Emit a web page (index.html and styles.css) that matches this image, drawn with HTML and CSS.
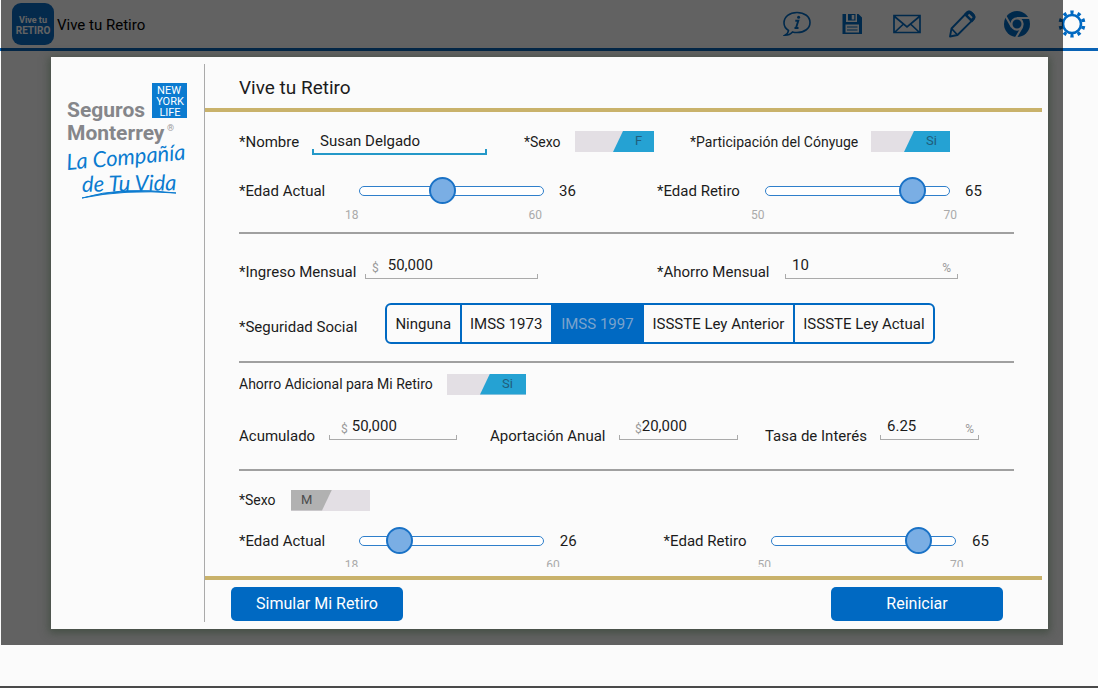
FILE: index.html
```html
<!DOCTYPE html>
<html lang="es">
<head>
<meta charset="utf-8">
<meta name="viewport" content="width=device-width, initial-scale=1">
<title>Vive tu Retiro</title>
<link rel="stylesheet" href="styles.css">
</head>
<body>
<div class="screen">
  <header class="topbar">
    <svg class="app-icon" viewBox="0 0 42 42" role="img" aria-label="Vive tu Retiro">
      <rect width="42" height="42" rx="9" fill="#0b6cc4"/>
      <text x="21" y="20" class="app-icon-text app-icon-small">Vive tu</text>
      <text x="21" y="31" class="app-icon-text app-icon-big">RETIRO</text>
    </svg>
    <span class="app-name">Vive tu Retiro</span>
    <nav class="actions" aria-label="Acciones">
      <button class="action" type="button" aria-label="Información">
        <svg viewBox="0 0 28 28" fill="none" stroke="#0069c2" stroke-width="1.6"><path d="M5.500 20.500C2.500 18.500 1 16 1 13 1 6.500 6.500 2.500 14 2.500S27 6.500 27 12.500 21.500 22.500 14 22.500c-2 0-3.200-.2-4.500-.6C7.500 24.300 5 25.200 2 25.200c2-1.200 3.300-2.700 3.500-4.700z"/><path d="M12.300 10.800h3l-2.300 7.200h2.500M11.500 18h2" stroke-width="1.900"/><circle cx="15.600" cy="7.200" r="1.500" fill="#0069c2" stroke="none"/></svg>
      </button>
      <button class="action" type="button" aria-label="Guardar">
        <svg viewBox="0 0 28 28"><path fill="#0069c2" fill-rule="evenodd" d="M4.500 4H8v8h11V4h1.500L24 7.500V24H4.500zM7.500 14.500v8h13.500v-8zM10 4h7.500v6.500H10zm3.700 1v4.500h2.600V5z"/><path d="M9 17h10.500M9 20h10.500" stroke="#0069c2" stroke-width="1.200"/></svg>
      </button>
      <button class="action" type="button" aria-label="Correo">
        <svg viewBox="0 0 28 28" fill="none" stroke="#0069c2" stroke-width="1.700"><path d="M1 5.500h26v17H1zM1.500 6.500 14 17 26.500 6.500M2 22l8.500-8M26 22l-8.500-8"/></svg>
      </button>
      <button class="action" type="button" aria-label="Editar">
        <svg viewBox="0 0 28 28" fill="none" stroke="#0069c2" stroke-width="1.800" stroke-linejoin="round"><path d="M2 26.500 3.500 18.500 19 2.500q2-2 4.500.2l2 2q2 2.300 0 4.500L9.500 25zM3.500 18.500l6 6.500"/><path d="m17 4.500 6.800 6.800 1.900-2.100q1.600-2.200-.2-4.500l-2-2q-2.500-2-4.500-.2z" fill="#0069c2"/><path d="m20.500 4.500 3.500 3.500" stroke="#fbfbfb" stroke-width="2"/></svg>
      </button>
      <button class="action" type="button" aria-label="Navegador">
        <svg viewBox="0 0 28 28"><circle cx="14" cy="14" r="13" fill="#0069c2"/><circle cx="14" cy="14" r="5.600" fill="none" stroke="#fbfbfb" stroke-width="2.200"/><path d="M14 8h13M8.800 17 2.500 6M19.200 17l-6.500 11" stroke="#fbfbfb" stroke-width="2"/></svg>
      </button>
      <button class="action" type="button" aria-label="Configuración">
        <svg viewBox="0 0 28 28" fill="none" stroke="#0069c2"><circle cx="14" cy="14" r="9" stroke-width="2.600"/><circle cx="14" cy="14" r="11.700" stroke-width="3.600" pathLength="100" stroke-dasharray="4.400 5.600" stroke-dashoffset="-2.800"/></svg>
      </button>
    </nav>
  </header>

  <div class="overlay">
    <section class="dialog" role="dialog" aria-labelledby="dialog-title">
      <aside class="brand">
        <svg class="brand-logo" viewBox="0 0 124 124" role="img" aria-label="Seguros Monterrey New York Life, La Compañía de Tu Vida">
          <rect x="87" y="1" width="35" height="35" fill="#0b7bd0"/>
          <text x="104" y="12" class="nyl">NEW</text>
          <text x="105" y="23" class="nyl">YORK</text>
          <text x="105" y="34" class="nyl">LIFE</text>
          <text x="2" y="35" class="brand-name">Seguros</text>
          <text x="2" y="58" class="brand-name">Monterrey</text>
          <text x="102" y="49" class="brand-reg">®</text>
          <text x="2" y="88" class="motto" transform="rotate(-5 2 88)">La Compañía</text>
          <text x="17" y="110" class="motto" transform="rotate(-1 17 110)">de Tu Vida</text>
          <path d="M17 116Q57 104 111 111 60 107 17 116z" fill="#0b7bd0" stroke="#0b7bd0"/>
        </svg>
      </aside>
      <form class="panel">
        <h1 class="panel-title" id="dialog-title">Vive tu Retiro</h1>
        <div class="panel-body">
          <div class="row row-person">
            <label for="nombre">*Nombre</label>
            <span class="field field-active field-name"><input id="nombre" type="text" value="Susan Delgado"></span>
            <label class="small" for="sexo">*Sexo</label>
            <span class="switch switch-on"><input id="sexo" type="checkbox" checked><span class="switch-thumb">F</span></span>
            <label class="small" for="conyuge">*Participación del Cónyuge</label>
            <span class="switch switch-on switch-wide"><input id="conyuge" type="checkbox" checked><span class="switch-thumb">Si</span></span>
          </div>
          <div class="row row-age">
            <label for="edad">*Edad Actual</label>
            <input class="slider" id="edad" type="range" min="18" max="60" step="0.5" value="36.5">
            <output for="edad">36</output>
            <label for="retiro">*Edad Retiro</label>
            <input class="slider" id="retiro" type="range" min="50" max="70" value="67">
            <output for="retiro">65</output>
            <div class="scale scale-first scale-short"><span>18</span><span>60</span></div>
            <div class="scale scale-second"><span>50</span><span>70</span></div>
          </div>
          <hr class="rule">
          <div class="row row-income">
            <label for="ingreso">*Ingreso Mensual</label>
            <span class="field field-wide"><span class="unit">$</span><input id="ingreso" type="text" value="50,000"></span>
            <label for="ahorro">*Ahorro Mensual</label>
            <span class="field field-wide"><input id="ahorro" type="text" value="10"><span class="unit">%</span></span>
          </div>
          <div class="row row-social">
            <span class="caption" id="social">*Seguridad Social</span>
            <div class="segments" role="group" aria-labelledby="social">
              <button type="button">Ninguna</button>
              <button type="button">IMSS 1973</button>
              <button type="button" class="selected" aria-pressed="true">IMSS 1997</button>
              <button type="button">ISSSTE Ley Anterior</button>
              <button type="button">ISSSTE Ley Actual</button>
            </div>
          </div>
          <hr class="rule">
          <div class="row row-extra">
            <label class="small" for="adicional">Ahorro Adicional para Mi Retiro</label>
            <span class="switch switch-on switch-wide"><input id="adicional" type="checkbox" checked><span class="switch-thumb">Si</span></span>
          </div>
          <div class="row row-savings">
            <label for="acumulado">Acumulado</label>
            <span class="field field-saved"><span class="unit">$</span><input id="acumulado" type="text" value="50,000"></span>
            <label for="aportacion">Aportación Anual</label>
            <span class="field field-yearly"><span class="unit">$</span><input id="aportacion" type="text" value="20,000"></span>
            <label for="tasa">Tasa de Interés</label>
            <span class="field field-rate"><input id="tasa" type="text" value="6.25"><span class="unit">%</span></span>
          </div>
          <hr class="rule">
          <div class="row row-spouse">
            <label class="small" for="sexo2">*Sexo</label>
            <span class="switch"><input id="sexo2" type="checkbox"><span class="switch-thumb">M</span></span>
          </div>
          <div class="row row-age row-age-spouse">
            <label for="edad2">*Edad Actual</label>
            <input class="slider" id="edad2" type="range" min="18" max="60" value="25">
            <output for="edad2">26</output>
            <label for="retiro2">*Edad Retiro</label>
            <input class="slider" id="retiro2" type="range" min="50" max="70" value="67">
            <output for="retiro2">65</output>
            <div class="scale scale-first scale-long"><span>18</span><span>60</span></div>
            <div class="scale scale-second"><span>50</span><span>70</span></div>
          </div>
        </div>
        <div class="panel-footer">
          <button class="primary" type="submit">Simular Mi Retiro</button>
          <button class="primary" type="reset">Reiniciar</button>
        </div>
      </form>
    </section>
  </div>
</div>
</body>
</html>
```
FILE: styles.css
```css
* { box-sizing: border-box; }

body {
  margin: 0;
  font: 15px/20px Roboto, "Liberation Sans", sans-serif;
  color: #1c1c1c;
  background: #fbfbfb;
}

button, input { font: inherit; color: inherit; }
button { cursor: pointer; }

.screen {
  position: relative;
  min-height: 100vh;
  border-bottom: 2px solid #4a4a4a;
  overflow: hidden;
}

.topbar {
  display: flex;
  align-items: center;
  height: 51px;
  padding: 0 12px;
  border-bottom: 3px solid #0a63b5;
}

.app-icon { width: 42px; height: 42px; }
.app-icon-text {
  fill: #fff;
  font-weight: 700;
  text-anchor: middle;
}
.app-icon-small { font-size: 9px; }
.app-icon-big { font-size: 10px; }
.app-name { margin-left: 3px; padding-top: 2px; color: #000; }

.actions { display: flex; gap: 27px; margin-left: auto; }
.action { width: 28px; height: 28px; padding: 0; border: 0; background: none; }
.action svg { display: block; width: 28px; height: 28px; }

.overlay {
  position: absolute;
  inset: 0 35px 41px 1px;
  display: flex;
  padding: 57px 15px 16px 50px;
  background: rgba(0, 0, 0, 0.61);
}

.dialog {
  flex: 1;
  display: flex;
  min-width: 0;
  padding: 7px 6px 7px 0;
  background: #fbfbfb;
  box-shadow: 0 2px 8px 2px rgba(50, 66, 50, 0.6);
}

.brand {
  flex: none;
  width: 154px;
  padding: 18px 14px;
  border-right: 1px solid #aaa;
}
.brand-logo { display: block; width: 124px; height: 124px; }
.brand-name {
  fill: #85868a;
  font-size: 21px;
  font-weight: 700;
}
.brand-reg { fill: #999; font-size: 9px; }
.nyl { fill: #fff; font: 11px Roboto, sans-serif; text-anchor: middle; }
.motto { fill: #0b7bd0; font: italic 22px Lato, sans-serif; }

.panel {
  flex: 1;
  display: flex;
  flex-direction: column;
  min-width: 0;
}
.panel-title {
  height: 48px;
  margin: 0;
  padding: 12px 34px;
  border-bottom: 4px solid #c9b26b;
  font-size: 19px;
  line-height: 24px;
  font-weight: 400;
}
.panel-body {
  flex: 1 1 0;
  min-height: 0;
  margin-bottom: 9px;
  padding: 13px 28px 0 34px;
  overflow: hidden;
}
.panel-footer {
  display: flex;
  justify-content: space-between;
  padding: 7px 39px 1px 26px;
  border-top: 4px solid #c9b26b;
}
.primary {
  width: 172px;
  height: 34px;
  border: 0;
  border-radius: 5px;
  background: #0069c2;
  color: #fff;
  font-size: 16px;
}

.row { display: grid; align-items: center; white-space: nowrap; }
.row-person { grid-template-columns: 73fr 212fr 51fr 115fr 181fr 143fr; height: 33px; }
.row-age { grid-template-columns: 120fr 200fr 98fr 108fr 200fr 49fr; grid-template-rows: 28px 20px; margin-top: 19px; }
.row-income { grid-template-columns: 126fr 292fr 128fr 229fr; height: 30px; margin-top: 16px; }
.row-social { display: flex; justify-content: space-between; height: 41px; margin-top: 23px; padding-right: 79px; }
.row-extra { grid-template-columns: 208fr 567fr; height: 22px; margin-top: 10px; }
.row-savings { grid-template-columns: 90fr 161fr 129fr 146fr 115fr 134fr; height: 28px; margin-top: 19px; }
.row-spouse { grid-template-columns: 52fr 723fr; height: 22px; margin-top: 18px; }
.row-age-spouse { grid-template-columns: 120fr 200fr 104fr 108fr 201fr 42fr; margin-top: 16px; }

.small { font-size: 14px; }
.rule { height: 2px; margin: 7px 0 0; border: 0; background: #a0a0a0; }
.row-social + .rule { margin-top: 17px; }
.row-savings + .rule { margin-top: 27px; }

/* Text boxes with a bracket-shaped underline */
.field {
  position: relative;
  display: flex;
  align-items: center;
  height: 26px;
  padding: 0 7px 2px;
}
.field::after {
  content: "";
  position: absolute;
  inset: auto 0 0;
  height: 4px;
  border: 1px solid #aaa;
  border-top: 0;
  pointer-events: none;
}
.field input {
  flex: 1;
  width: 100%;
  min-width: 0;
  padding: 0;
  border: 0;
  outline: 0;
  background: none;
}
.field-active::after { border-color: #2498c8; border-width: 0 2px 2px; }
.field-name { width: 175px; align-self: end; margin-bottom: 3px; padding-left: 8px; }
.field-wide { width: 173px; }
.field-wide .unit:first-child { margin-right: 9px; }
.field-saved { width: 128px; padding-left: 12px; }
.field-saved .unit { margin-right: 4px; }
.field-yearly { width: 119px; padding-left: 16px; }
.field-rate { width: 99px; padding-right: 5px; }
.row-income label, .row-savings label { padding-top: 12px; }
.row-savings .field { align-self: start; }
.unit { padding-top: 6px; color: #999; font-size: 12px; }

.switch {
  position: relative;
  display: block;
  width: 79px;
  height: 21px;
  background: #e3dfe4;
  font-size: 13px;
  color: #4c4c4c;
}
.switch input { position: absolute; inset: 0; width: 100%; height: 100%; margin: 0; opacity: 0; }
.switch-thumb {
  display: block;
  width: 41px;
  height: 21px;
  padding-left: 10px;
  background: #b1b1b1;
  clip-path: polygon(0 0, 100% 0, 31px 100%, 0 100%);
  pointer-events: none;
}
.switch-on .switch-thumb {
  margin-left: auto;
  padding: 0 0 0 22px;
  background: #25a2d3;
  color: #205e7c;
  clip-path: polygon(10px 0, 100% 0, 100% 100%, 0 100%);
}
.switch-wide .switch-thumb { width: 46px; }

.slider {
  appearance: none;
  width: 185px;
  height: 27px;
  margin: 0;
  background: none;
}
.slider::-webkit-slider-runnable-track {
  height: 10px;
  border: 1px solid #2f7fcb;
  border-radius: 5px;
  background: #fff;
}
.slider::-webkit-slider-thumb {
  appearance: none;
  width: 27px;
  height: 27px;
  margin-top: -10px;
  border: 2px solid #1a72c6;
  border-radius: 50%;
  background: #7aaee4;
}

.scale {
  display: flex;
  justify-content: space-between;
  width: 206px;
  margin-left: -14px;
  font-size: 12px;
  color: #aaa;
}
.scale-first { grid-column: 2; }
.scale-second { grid-column: 5; }
.scale-short { width: 197px; }
.scale-long { width: 215px; }

.segments {
  display: flex;
  width: 550px;
  border: 2px solid #0069c2;
  border-radius: 6px;
  overflow: hidden;
}
.segments button {
  flex: 1 0 auto;
  height: 37px;
  padding: 0 7px;
  border: 0;
  background: none;
}
.segments button + button { border-left: 2px solid #0069c2; }
.segments .selected { background: #0069c2; color: #7ba3cc; }
.caption { padding-top: 6px; }
```
